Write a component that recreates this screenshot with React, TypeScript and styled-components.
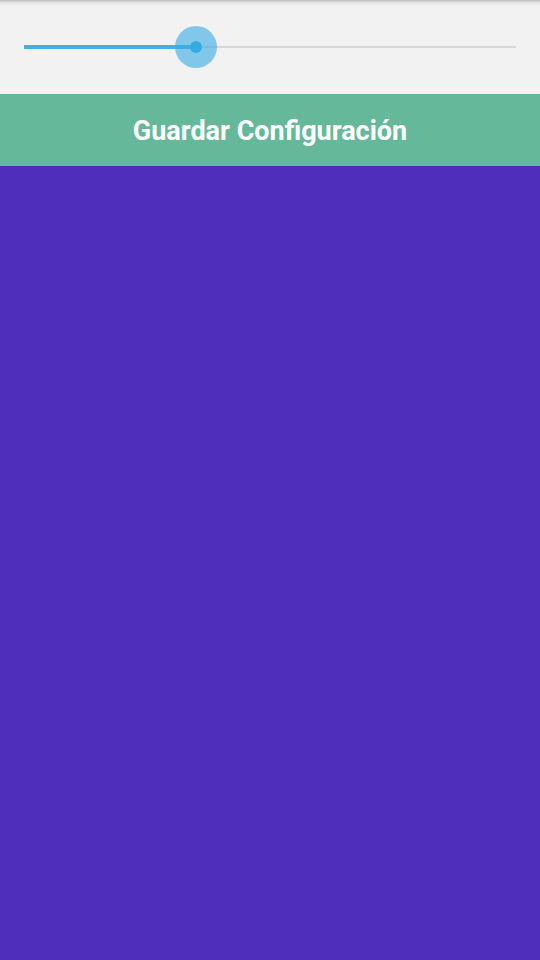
import React from "react";
import styled, { createGlobalStyle } from "styled-components";

const Global = createGlobalStyle`
  html, body { margin: 0; padding: 0; height: 100%; }
  body { font-family: Roboto, "Noto Sans", sans-serif; background: #4f2ebb; }
  #root { height: 100%; }
`;

const Screen = styled.div`
  display: flex;
  flex-direction: column;
  width: 540px;
  height: 960px;
  background: #4f2ebb;
`;

const SliderPanel = styled.div`
  position: relative;
  height: 94px;
  background: #f2f2f2;
  display: flex;
  align-items: center;
  padding: 0 24px;
  box-sizing: border-box;
  &::before {
    content: "";
    position: absolute;
    left: 0;
    right: 0;
    top: 0;
    height: 7px;
    background: linear-gradient(#bdbdbd, #e6e6e6 40%, #f2f2f2);
  }
`;

const Track = styled.div`
  position: relative;
  flex: 1;
  height: 2px;
  margin-top: -1px;
  background: #d6d6d6;
`;

const Active = styled.div`
  position: absolute;
  left: 0;
  top: -1px;
  height: 4px;
  background: #3bb3e8;
`;

const Halo = styled.div`
  position: absolute;
  top: 1px;
  width: 42px;
  height: 42px;
  border-radius: 50%;
  background: rgba(59, 172, 228, 0.62);
  transform: translate(-50%, -50%);
  display: flex;
  align-items: center;
  justify-content: center;
`;

const Dot = styled.div`
  width: 12px;
  height: 12px;
  border-radius: 50%;
  background: #32ace2;
`;

const SaveButton = styled.button`
  height: 72px;
  border: none;
  background: #66b89a;
  color: #ffffff;
  font-family: Roboto, "Noto Sans", sans-serif;
  font-weight: 700;
  font-size: 27px;
  display: flex;
  align-items: center;
  justify-content: center;
  padding: 2px 0 0;
  cursor: pointer;
`;

const Body = styled.div`
  flex: 1;
  background: #4f2ebb;
`;

export default function App() {
  const value = (196 - 24) / (516 - 24);
  return (
    <>
      <Global />
      <Screen>
        <SliderPanel>
          <Track>
            <Active style={{ width: `${value * 100}%` }} />
            <Halo style={{ left: `${value * 100}%` }}>
              <Dot />
            </Halo>
          </Track>
        </SliderPanel>
        <SaveButton>Guardar Configuración</SaveButton>
        <Body />
      </Screen>
    </>
  );
}
